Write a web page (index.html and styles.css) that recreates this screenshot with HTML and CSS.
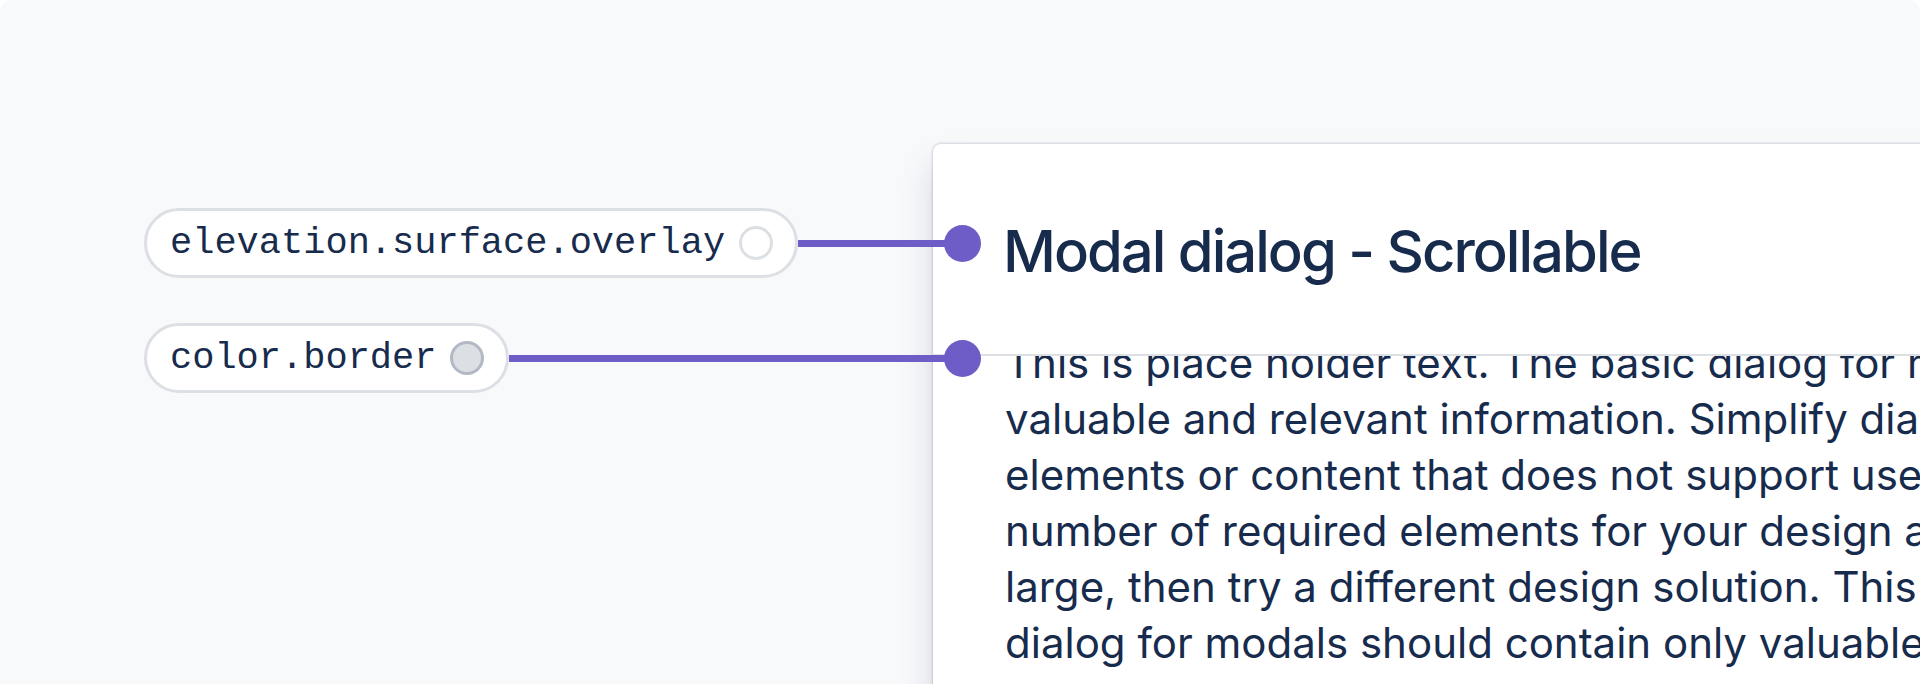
FILE: index.html
```html
<!DOCTYPE html>
<html lang="en">
<head>
<meta charset="utf-8">
<title>Modal dialog - Scrollable tokens</title>
<link rel="stylesheet" href="styles.css">
</head>
<body>
<div class="canvas">
  <section class="modal">
    <header class="modal-header">
      <h1 class="modal-title">Modal dialog - Scrollable</h1>
    </header>
    <div class="modal-body">
      <p class="modal-text">This is place holder text. The basic dialog for modals should contain only<br>valuable and relevant information. Simplify dialogs by removing unnecessary<br>elements or content that does not support user tasks. If you find that the<br>number of required elements for your design are making the dialog excessively<br>large, then try a different design solution. This is place holder text. The basic<br>dialog for modals should contain only valuable and relevant information.</p>
    </div>
  </section>

  <div class="annotations">
    <div class="annotation">
      <div class="token-pill">
        <span class="token-name">elevation.surface.overlay</span>
        <span class="swatch swatch-surface"></span>
      </div>
      <span class="connector"></span>
      <span class="pin"></span>
    </div>
    <div class="annotation">
      <div class="token-pill">
        <span class="token-name">color.border</span>
        <span class="swatch swatch-border"></span>
      </div>
      <span class="connector"></span>
      <span class="pin"></span>
    </div>
  </div>
</div>
</body>
</html>
```
FILE: styles.css
```css
html, body {
  margin: 0;
  padding: 0;
  background: #ffffff;
}

.canvas {
  position: relative;
  width: 1920px;
  height: 684px;
  box-sizing: border-box;
  padding: 144px 0 0 933px;
  background: #F8F9FB;
  border-radius: 12px 12px 0 0;
  overflow: hidden;
}

.modal {
  width: 1400px;
  height: 700px;
  background: #ffffff;
  border-radius: 8px;
  box-shadow: 0 22px 34px rgba(9, 30, 66, 0.15), 0 0 3px rgba(9, 30, 66, 0.31);
  display: flex;
  flex-direction: column;
  overflow: hidden;
}

.modal-header {
  padding: 73px 0 69px 70px;
  border-bottom: 2px solid #DCDFE4;
  flex: none;
}

.modal-title {
  margin: 0;
  font-family: Inter, "Noto Sans", sans-serif;
  font-size: 58px;
  line-height: 68px;
  font-weight: 500;
  letter-spacing: -2px;
  color: #172B4D;
}

.modal-body {
  flex: 1;
  overflow: hidden;
  padding-left: 72px;
}

.modal-text {
  margin: -21px 0 0;
  font-family: Inter, "Noto Sans", sans-serif;
  font-size: 42px;
  line-height: 56px;
  font-weight: 400;
  letter-spacing: 0;
  color: #172B4D;
  white-space: nowrap;
}

.annotations {
  position: absolute;
  left: 144px;
  top: 208px;
  width: 837px;
  display: flex;
  flex-direction: column;
  gap: 45px;
}

.annotation {
  display: flex;
  align-items: center;
}

.token-pill {
  height: 70px;
  box-sizing: border-box;
  display: flex;
  align-items: center;
  gap: 14px;
  padding: 0 22px 0 23px;
  background: #ffffff;
  border: 3px solid #DCDFE4;
  border-radius: 35px;
  flex: none;
}

.token-name {
  font-family: "Liberation Mono", "DejaVu Sans Mono", monospace;
  font-size: 37px;
  line-height: 40px;
  color: #172B4D;
}

.swatch {
  width: 34px;
  height: 34px;
  box-sizing: border-box;
  border-radius: 50%;
  flex: none;
}

.swatch-surface {
  background: #ffffff;
  border: 3px solid #DCDFE4;
}

.swatch-border {
  background: #DCDFE4;
  border: 3px solid #B3B9C4;
}

.connector {
  flex: 1;
  height: 7px;
  background: #6E5DC6;
}

.pin {
  width: 37px;
  height: 37px;
  border-radius: 50%;
  background: #6E5DC6;
  flex: none;
  margin-left: -1px;
}
```
